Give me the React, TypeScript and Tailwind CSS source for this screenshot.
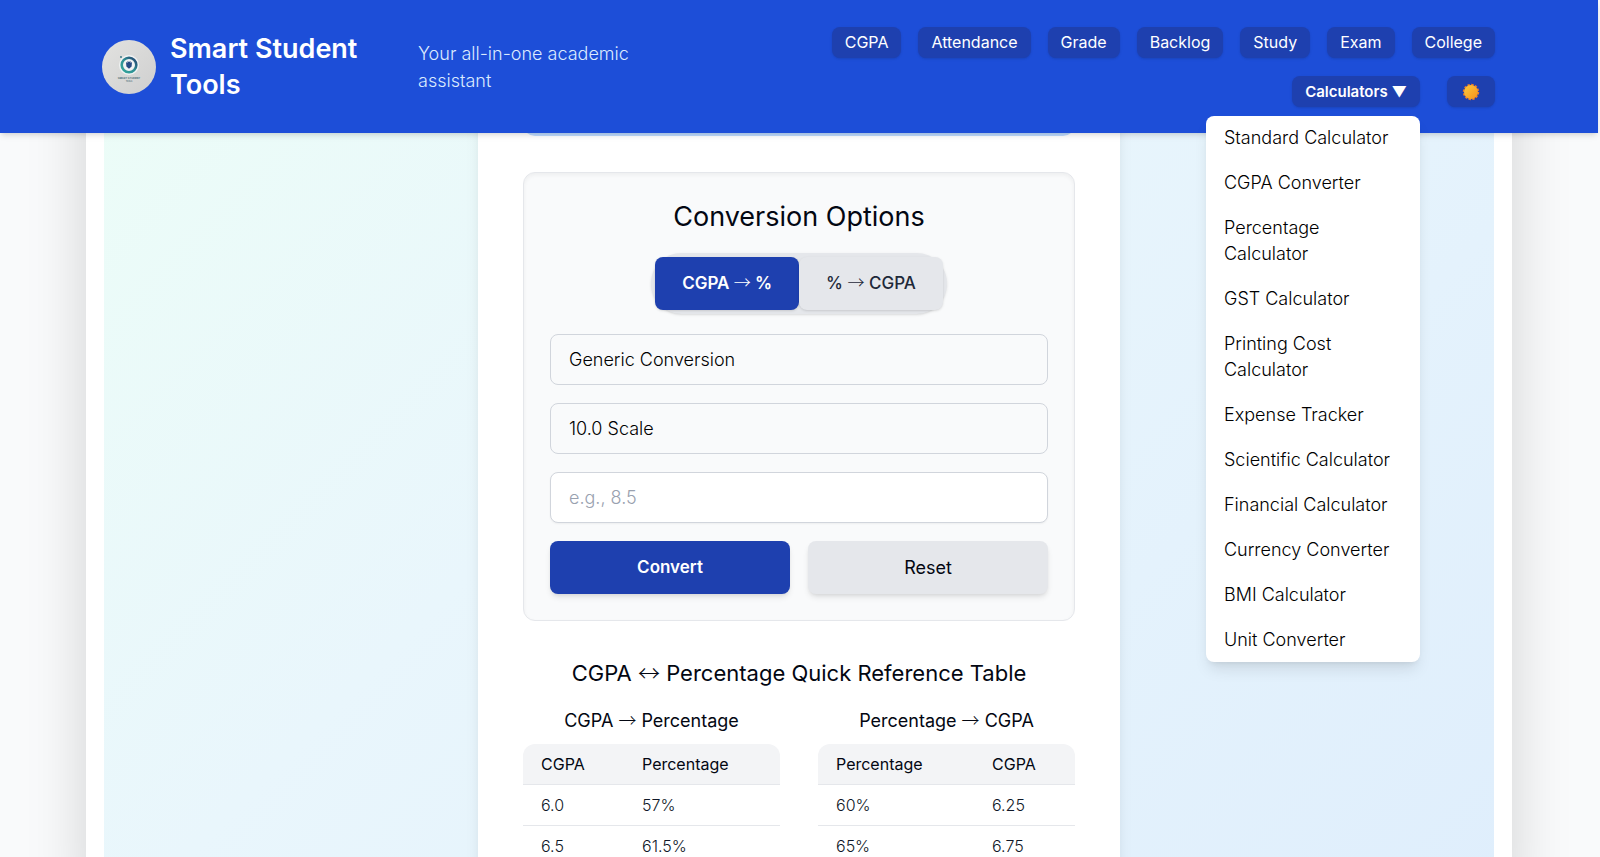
import { useState } from "react";

const navLinks = ["CGPA", "Attendance", "Grade", "Backlog", "Study", "Exam", "College"];

const calculatorLinks = [
    "Standard Calculator",
    "CGPA Converter",
    "Percentage Calculator",
    "GST Calculator",
    "Printing Cost Calculator",
    "Expense Tracker",
    "Scientific Calculator",
    "Financial Calculator",
    "Currency Converter",
    "BMI Calculator",
    "Unit Converter",
];

const cgpaRows = [
    ["6.0", "57%"],
    ["6.5", "61.5%"],
];

const percentageRows = [
    ["60%", "6.25"],
    ["65%", "6.75"],
];

const Logo = () => (
    <svg viewBox="0 0 54 54" className="h-[54px] w-[54px] shrink-0" aria-hidden="true">
        <defs>
            <linearGradient id="logo-ring" x1="0" y1="1" x2="1" y2="0">
                <stop offset="0" stopColor="#35a79c" />
                <stop offset="0.5" stopColor="#2f8f94" />
                <stop offset="1" stopColor="#24406f" />
            </linearGradient>
            <linearGradient id="logo-disc" x1="0" y1="0" x2="1" y2="1">
                <stop offset="0" stopColor="#e2e2e0" />
                <stop offset="1" stopColor="#cfcfcf" />
            </linearGradient>
        </defs>
        <circle cx="27" cy="27" r="27" fill="url(#logo-disc)" />
        <circle cx="27" cy="25" r="10" fill="#f1f3f3" />
        <circle cx="27" cy="25" r="7.3" fill="none" stroke="url(#logo-ring)" strokeWidth="2.6" />
        <path d="M24 22l1.5 1v-2l1.5 1 1.5-1v2l1.5-1-.4 4.4-2.6 2.4-2.6-2.4z" fill="#274b84" />
        <circle cx="19" cy="17" r="0.9" fill="#2c6f80" />
        <text x="27" y="39" textAnchor="middle" fontSize="2.6" fontWeight="600" fill="#35606b">
            SMART STUDENT
        </text>
        <text x="27" y="42" textAnchor="middle" fontSize="2" fill="#35606b">
            TOOLS
        </text>
    </svg>
);

const SunIcon = () => (
    <svg viewBox="0 0 18 18" className="h-[18px] w-[18px]" aria-hidden="true">
        <defs>
            <linearGradient id="sun-fill" x1="0" y1="0" x2="1" y2="1">
                <stop offset="0" stopColor="#fdc93c" />
                <stop offset="1" stopColor="#f5921c" />
            </linearGradient>
        </defs>
        <circle cx="9" cy="9" r="7.3" fill="none" stroke="#ee7c24" strokeWidth="1.8" strokeDasharray="2.4 1.42" />
        <circle cx="9" cy="9" r="7" fill="url(#sun-fill)" />
    </svg>
);

// Inter draws short heavy arrows, the CJK family has long thin ones
const Arrow = ({ children }: { children: string }) => (
    <span className="font-['Noto_Sans_CJK_JP',sans-serif] leading-none font-light">{children}</span>
);

const Header = () => {
    const [menuOpen, setMenuOpen] = useState(true);

    return (
        <header className="relative z-10 mr-0.5 flex items-center justify-between bg-[#1d4ed8] pt-[27px] pr-[103px] pb-[26px] pl-[102px] shadow-md">
            <div className="flex items-center">
                <Logo />
                <h1 className="ml-[14px] w-[216px] text-[27px] leading-9 font-semibold text-white">Smart Student Tools</h1>
                <p className="ml-8 w-56 text-lg leading-[27px] font-light text-blue-100">
                    Your all-in-one academic assistant
                </p>
            </div>
            <nav className="flex w-[680px] flex-wrap justify-end gap-x-[17px] gap-y-[18px]">
                {navLinks.map((label) => (
                    <a
                        key={label}
                        href="#"
                        className="rounded-lg bg-[#1e40af] px-[13px] text-base leading-[31px] text-white shadow-sm"
                    >
                        {label}
                    </a>
                ))}
                <div className="relative">
                    <button
                        type="button"
                        aria-expanded={menuOpen}
                        onClick={() => setMenuOpen(!menuOpen)}
                        className="rounded-lg bg-[#1e40af] px-[13px] text-[15px] leading-[31px] font-semibold whitespace-nowrap text-white shadow-sm"
                    >
                        Calculators ▼
                    </button>
                    {menuOpen && (
                        <ul className="absolute top-full right-0 mt-[9px] flex w-[214px] flex-col gap-px rounded-lg bg-white shadow-lg">
                            {calculatorLinks.map((label) => (
                                <li key={label}>
                                    <a href="#" className="block px-[18px] py-[9px] text-lg leading-[26px] font-light text-black">
                                        {label}
                                    </a>
                                </li>
                            ))}
                        </ul>
                    )}
                </div>
                <button
                    type="button"
                    aria-label="Toggle theme"
                    className="ml-[10px] flex h-[31px] w-12 items-center justify-center rounded-lg bg-[#1e40af] shadow-sm"
                >
                    <SunIcon />
                </button>
            </nav>
        </header>
    );
};

const ConversionOptions = () => {
    const [mode, setMode] = useState("toPercent");
    const [value, setValue] = useState("");

    const tabClass = (active: boolean) =>
        active
            ? "rounded-lg bg-[#1e40af] px-[27px] text-[17px] leading-[53px] font-semibold text-white shadow-sm"
            : "rounded-lg bg-gray-200 px-[27px] text-[17px] leading-[53px] font-medium text-gray-800 shadow-sm";

    return (
        <section className="rounded-xl border border-gray-200 bg-[#f9fafb] p-[26px] inset-shadow-sm">
            <h2 className="text-center text-[27px] leading-9 text-gray-950">Conversion Options</h2>
            <div className="mt-[18px] flex justify-center">
                <div className="flex rounded-full bg-gray-200 p-1 shadow-sm">
                    <button type="button" onClick={() => setMode("toPercent")} className={tabClass(mode === "toPercent")}>
                        CGPA <Arrow>→</Arrow> %
                    </button>
                    <button type="button" onClick={() => setMode("toCgpa")} className={tabClass(mode === "toCgpa")}>
                        % <Arrow>→</Arrow> CGPA
                    </button>
                </div>
            </div>
            <div className="mt-5 flex flex-col gap-[18px]">
                <select
                    aria-label="University"
                    className="h-[51px] w-full appearance-none rounded-lg border border-gray-300 bg-[#f9fafb] px-[18px] text-lg font-light text-black"
                >
                    <option>Generic Conversion</option>
                </select>
                <select
                    aria-label="Scale"
                    className="h-[51px] w-full appearance-none rounded-lg border border-gray-300 bg-[#f9fafb] px-[18px] text-lg font-light text-black"
                >
                    <option>10.0 Scale</option>
                </select>
                <input
                    type="text"
                    aria-label="Value"
                    placeholder="e.g., 8.5"
                    value={value}
                    onChange={(e) => setValue(e.target.value)}
                    className="h-[51px] w-full rounded-lg border border-gray-300 bg-white px-[18px] text-lg font-light text-black shadow-xs placeholder:text-gray-400"
                />
                <div className="grid grid-cols-2 gap-[18px]">
                    <button type="button" className="h-[53px] rounded-lg bg-[#1e40af] text-[17px] font-semibold text-white shadow-md">
                        Convert
                    </button>
                    <button
                        type="button"
                        onClick={() => setValue("")}
                        className="h-[53px] rounded-lg bg-gray-200 text-lg text-gray-950 shadow-md"
                    >
                        Reset
                    </button>
                </div>
            </div>
        </section>
    );
};

type ReferenceTableProps = {
    from: string;
    to: string;
    rows: string[][];
    firstColumn: string;
};

const ReferenceTable = ({ from, to, rows, firstColumn }: ReferenceTableProps) => (
    <div>
        <h3 className="text-center text-lg leading-[27px] text-gray-950">
            {from} <Arrow>→</Arrow> {to}
        </h3>
        <div className="mt-[10px] overflow-hidden rounded-t-xl">
            <table className="w-full table-fixed text-left text-base leading-6">
                <thead className="bg-gray-100">
                    <tr className="border-b border-gray-200">
                        <th className={`${firstColumn} py-2 pl-[18px] font-normal text-gray-950`}>{from}</th>
                        <th className="py-2 pl-[18px] font-normal text-gray-950">{to}</th>
                    </tr>
                </thead>
                <tbody>
                    {rows.map((row) => (
                        <tr key={row[0]} className="border-b border-gray-200">
                            {row.map((cell) => (
                                <td key={cell} className="py-2 pl-[18px] font-light text-gray-900">
                                    {cell}
                                </td>
                            ))}
                        </tr>
                    ))}
                </tbody>
            </table>
        </div>
    </div>
);

export default function App() {
    return (
        <div className="flex h-screen flex-col overflow-hidden bg-[#f9fafb] font-['Inter',sans-serif]">
            <Header />
            <main className="flex-1 overflow-hidden pr-[88px] pl-[86px]">
                <div className="-mt-24 bg-white px-[18px] shadow-[0_0_56px_rgba(0,0,0,0.16)]">
                    <div className="flex justify-center bg-linear-135 from-[#ecfdf7] via-[#e9f6fc] via-40% to-[#dfeefc]">
                        <div className="w-[642px] bg-white px-[45px] pt-8 pb-10 shadow-lg">
                            <div className="mb-9 h-[67px] rounded-xl bg-blue-200" />
                            <ConversionOptions />
                            <h2 className="mt-9 text-center text-[22px] leading-8 text-gray-950">
                                CGPA <Arrow>↔</Arrow> Percentage Quick Reference Table
                            </h2>
                            <div className="mt-[18px] grid grid-cols-2 gap-[38px]">
                                <ReferenceTable from="CGPA" to="Percentage" rows={cgpaRows} firstColumn="w-[101px]" />
                                <ReferenceTable from="Percentage" to="CGPA" rows={percentageRows} firstColumn="w-[156px]" />
                            </div>
                        </div>
                    </div>
                </div>
            </main>
        </div>
    );
}
